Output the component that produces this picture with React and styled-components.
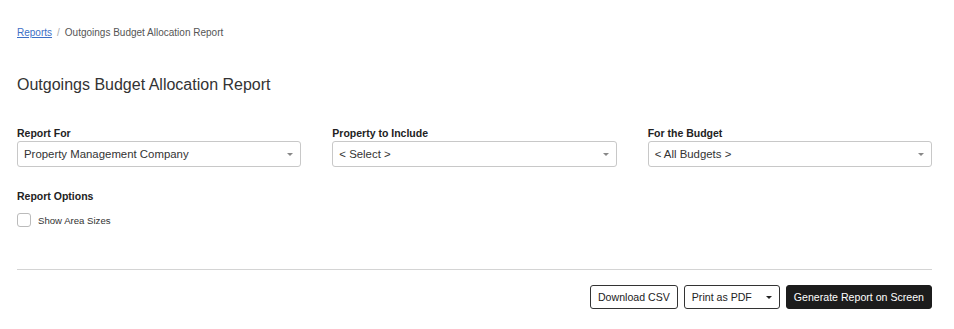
import React from "react";
import styled, { createGlobalStyle } from "styled-components";

const GlobalStyle = createGlobalStyle`
  html, body {
    margin: 0;
    padding: 0;
    background: #fff;
    font-family: "Liberation Sans", Arial, sans-serif;
    color: #333;
  }
`;

const Page = styled.div`
  padding: 26px 22px 20px 17px;
`;

const Breadcrumb = styled.nav`
  display: flex;
  align-items: center;
  gap: 5px;
  font-size: 10px;
  line-height: 14px;
  color: #555;
`;

const Crumb = styled.a`
  color: #3d6fc6;
  text-decoration: underline;
`;

const Sep = styled.span`
  color: #aaa;
`;

const Title = styled.h1`
  margin: 35px 0 0;
  font-size: 16px;
  line-height: 20px;
  font-weight: normal;
  color: #333;
`;

const Grid = styled.div`
  display: grid;
  grid-template-columns: repeat(3, 1fr);
  column-gap: 31px;
  margin-top: 31px;
`;

const Field = styled.div`
  display: flex;
  flex-direction: column;
`;

const Label = styled.label`
  font-size: 10.5px;
  font-weight: bold;
  line-height: 14px;
  color: #222;
  margin-bottom: 1px;
`;

const Select = styled.div`
  display: flex;
  align-items: center;
  justify-content: space-between;
  height: 26px;
  box-sizing: border-box;
  border: 1px solid #c8c8c8;
  border-radius: 3px;
  padding: 0 7px 0 6px;
  font-size: 11.4px;
  color: #333;
`;

const Caret = styled.span`
  width: 0;
  height: 0;
  border-left: 3px solid transparent;
  border-right: 3px solid transparent;
  border-top: 3px solid ${(p) => p.color || "#888"};
`;

const Options = styled.div`
  margin-top: 22px;
  display: flex;
  flex-direction: column;
`;

const CheckRow = styled.label`
  display: flex;
  align-items: center;
  gap: 7px;
  margin-top: 9px;
  font-size: 9.6px;
  color: #333;
`;

const Box = styled.span`
  width: 14px;
  height: 14px;
  box-sizing: border-box;
  border: 1px solid #bbb;
  border-radius: 3px;
`;

const Divider = styled.hr`
  margin: 42px 0 0;
  border: 0;
  border-top: 1px solid #d4d4d4;
`;

const Actions = styled.div`
  display: flex;
  justify-content: flex-end;
  gap: 6px;
  margin-top: 15px;
`;

const Button = styled.button`
  display: flex;
  align-items: center;
  gap: 14px;
  height: 24px;
  box-sizing: border-box;
  padding: 0 7px;
  font-family: inherit;
  font-size: 10.6px;
  border-radius: 3px;
  border: 1px solid ${(p) => (p.$dark ? "#1c1c1c" : "#333")};
  background: ${(p) => (p.$dark ? "#1c1c1c" : "#fff")};
  color: ${(p) => (p.$dark ? "#fff" : "#222")};
  cursor: pointer;
`;

function SelectField({ label, value }) {
  return (
    <Field>
      <Label>{label}</Label>
      <Select>
        <span>{value}</span>
        <Caret />
      </Select>
    </Field>
  );
}

export default function App() {
  return (
    <>
      <GlobalStyle />
      <Page>
        <Breadcrumb>
          <Crumb href="#">Reports</Crumb>
          <Sep>/</Sep>
          <span>Outgoings Budget Allocation Report</span>
        </Breadcrumb>
        <Title>Outgoings Budget Allocation Report</Title>
        <Grid>
          <SelectField label="Report For" value="Property Management Company" />
          <SelectField label="Property to Include" value="< Select >" />
          <SelectField label="For the Budget" value="< All Budgets >" />
        </Grid>
        <Options>
          <Label>Report Options</Label>
          <CheckRow>
            <Box />
            Show Area Sizes
          </CheckRow>
        </Options>
        <Divider />
        <Actions>
          <Button>Download CSV</Button>
          <Button>
            Print as PDF
            <Caret color="#222" />
          </Button>
          <Button $dark>Generate Report on Screen</Button>
        </Actions>
      </Page>
    </>
  );
}
